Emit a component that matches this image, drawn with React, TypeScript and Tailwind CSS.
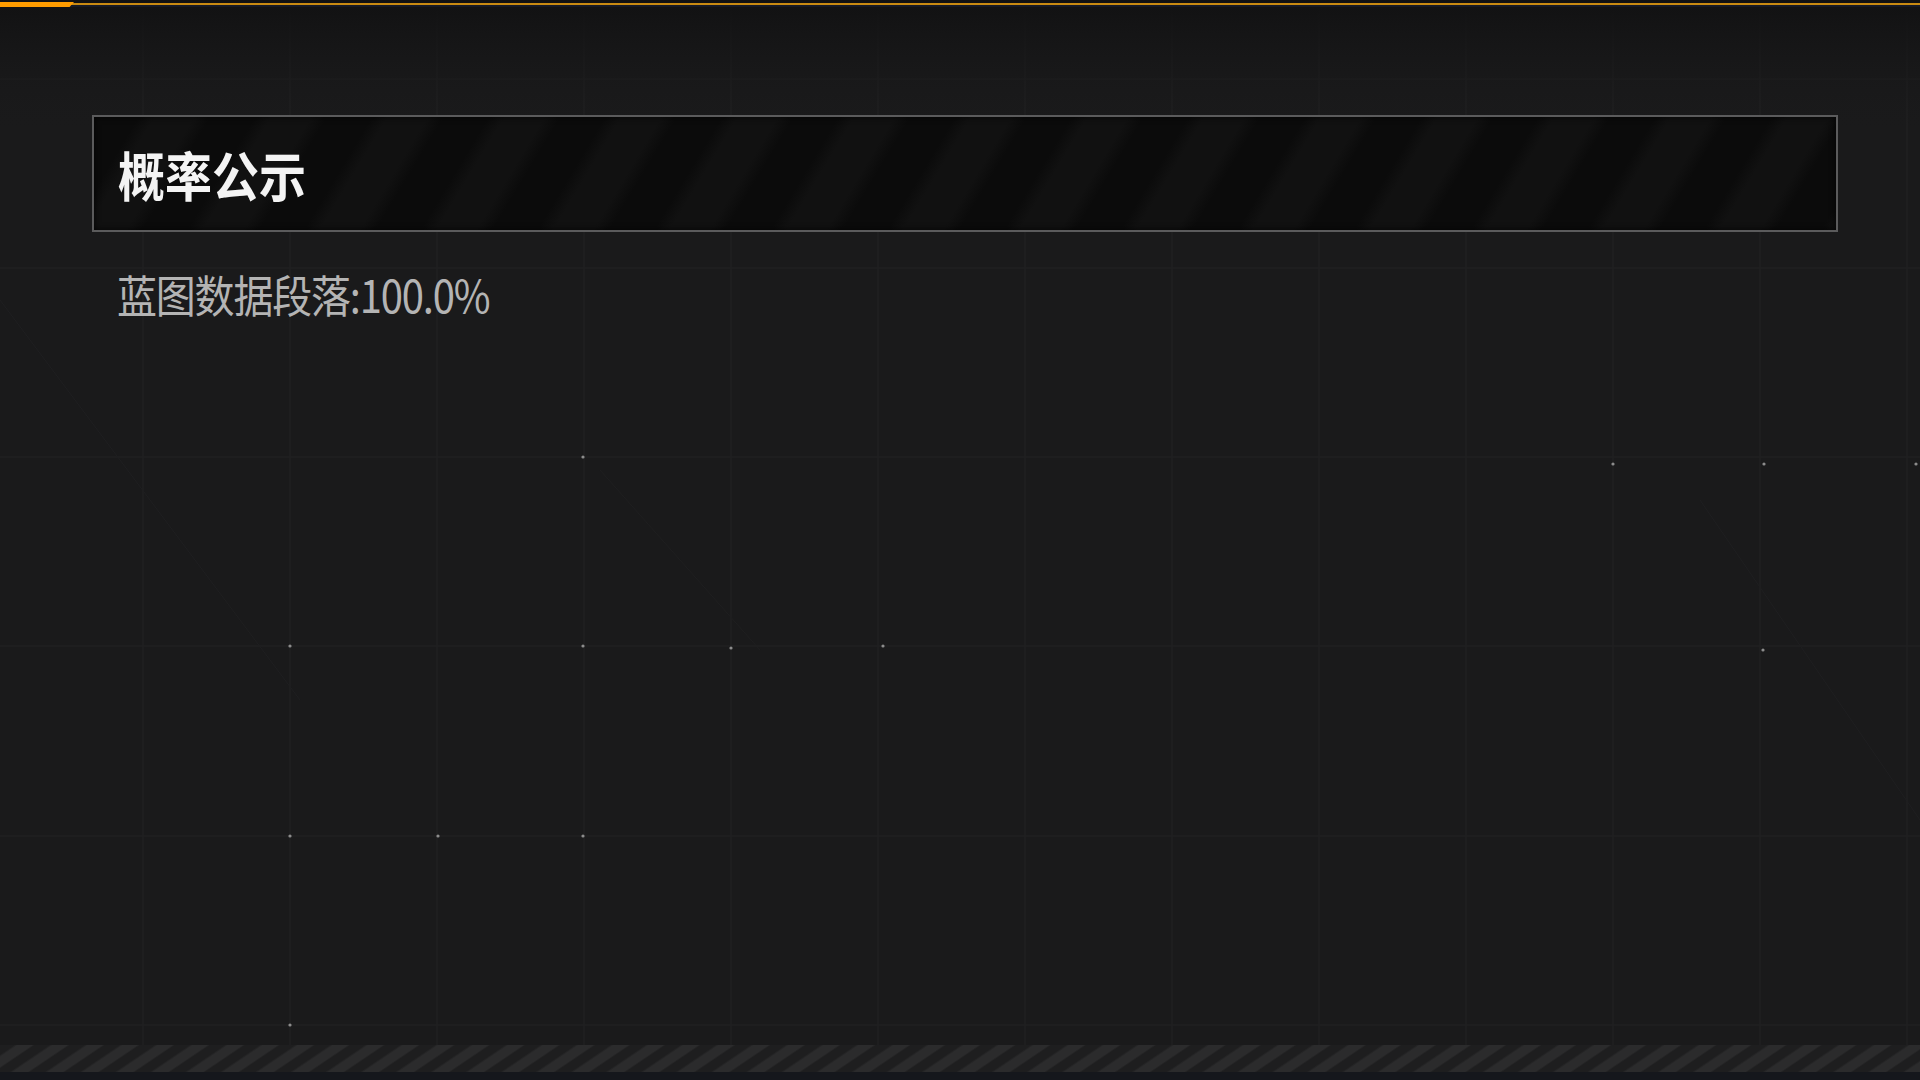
import React from "react";

const cols = Array.from({ length: 14 }, (_, i) => -4 + i * 147);
const rows = [79, 268, 457, 646, 836, 1025];
const dots: [number, number][] = [
  [583, 457],
  [290, 646],
  [583, 646],
  [731, 648],
  [883, 646],
  [290, 836],
  [438, 836],
  [583, 836],
  [290, 1025],
  [1613, 464],
  [1764, 464],
  [1916, 464],
  [1763, 650],
];

const GridBackdrop = () => (
  <svg className="absolute inset-0 pointer-events-none" width="1920" height="1080">
    <defs>
      <linearGradient id="fade" x1="0" y1="0" x2="0" y2="1">
        <stop offset="0" stopColor="#111112" />
        <stop offset="0.12" stopColor="#19191a" stopOpacity="0" />
      </linearGradient>
    </defs>
    {cols.map((x) => (
      <line key={"c" + x} x1={x} y1={0} x2={x} y2={1080} stroke="#212122" strokeWidth="1.5" />
    ))}
    {rows.map((y) => (
      <line key={"r" + y} x1={0} y1={y} x2={1920} y2={y} stroke="#212122" strokeWidth="1.5" />
    ))}
    <line x1="0" y1="300" x2="300" y2="700" stroke="#1f1f20" strokeWidth="1" />
    <line x1="600" y1="470" x2="760" y2="650" stroke="#1f1f20" strokeWidth="1" />
    <line x1="1700" y1="500" x2="1920" y2="820" stroke="#1f1f20" strokeWidth="1" />
    {dots.map(([x, y]) => (
      <circle key={x + "-" + y} cx={x} cy={y} r="1.6" fill="#8c8c8c" />
    ))}
    <rect x="0" y="0" width="1920" height="1080" fill="url(#fade)" />
  </svg>
);

const TopRule = () => (
  <div className="relative h-[9px] w-full">
    <div className="absolute left-0 right-0 top-[3px] h-[2px] bg-[#c98a12]" />
    <div className="absolute left-0 right-0 top-[5px] h-[2px] bg-[#161a26]" />
    <div className="absolute left-0 top-[2px] h-[5px] w-[74px] bg-[#ff9c00] [clip-path:polygon(0_0,100%_0,94%_100%,0_100%)]" />
  </div>
);

export default function App() {
  return (
    <div
      className="relative w-[1920px] h-[1080px] overflow-hidden bg-[#1a1a1b]"
      style={{ fontFamily: '"Noto Sans CJK SC", "Noto Sans", sans-serif' }}
    >
      <GridBackdrop />

      <div className="relative flex flex-col h-full">
        <TopRule />

        <div className="pl-[92px] pt-[106px]">
          <div className="flex items-center w-[1746px] h-[117px] border-2 border-[#5b5b5c] bg-[#0c0c0c] bg-[repeating-linear-gradient(121deg,#0b0b0b_0px,#0b0b0b_38px,#111111_52px,#111111_86px,#0b0b0b_100px)] pl-[24px] shadow-[inset_0_0_6px_rgba(0,0,0,0.8)]">
            <span className="text-[47px] leading-none font-bold text-[#f4f4f4] scale-y-[1.14] inline-block">
              概率公示
            </span>
          </div>

          <div className="pl-[25px] pt-[42px]">
            <span className="inline-block text-[40px] leading-none text-[#b4b4b4] scale-y-[1.12] tracking-[-1.2px]">
              蓝图数据段落:100.0%
            </span>
          </div>
        </div>

        <div className="mt-auto">
          <div className="h-[27px] bg-[#1e1e1f] bg-[repeating-linear-gradient(146deg,#1e1e1f_0px,#1e1e1f_8px,#2b2b2c_10px,#2b2b2c_18px,#1e1e1f_19.6px)]" />
          <div className="h-[8px] bg-[#15171c]" />
        </div>
      </div>
    </div>
  );
}
